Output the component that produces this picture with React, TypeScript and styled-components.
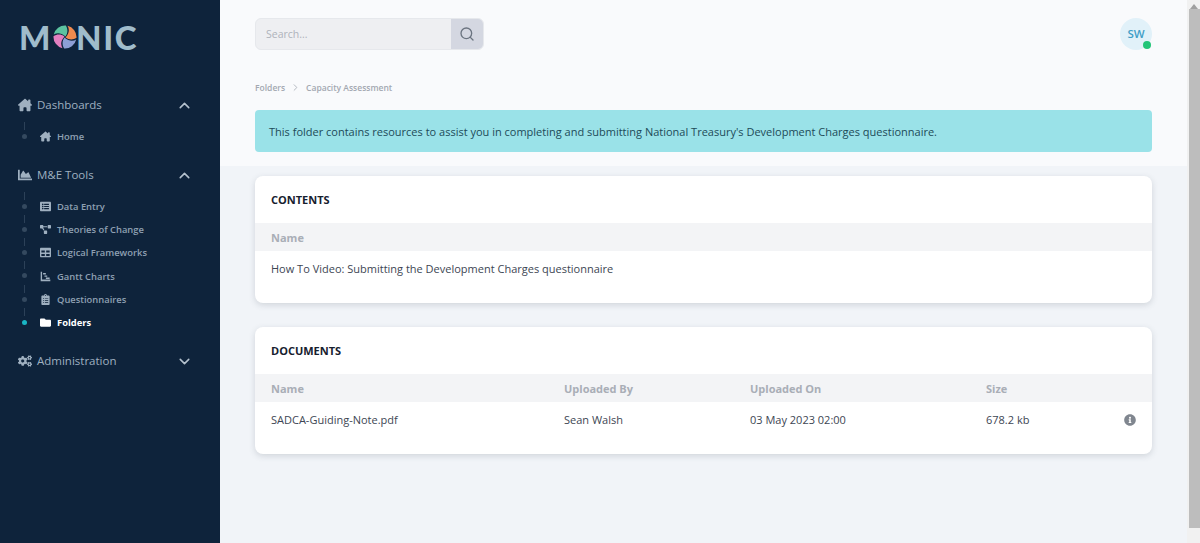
import React from "react";
import styled, { createGlobalStyle } from "styled-components";
import {
  FaChartArea, FaListAlt, FaProjectDiagram, FaTable,
  FaClipboardList, FaFolder, FaCogs, FaInfoCircle,
} from "react-icons/fa";
import { FaHouseChimney } from "react-icons/fa6";
import { FiChevronUp, FiChevronDown, FiChevronRight, FiSearch } from "react-icons/fi";

const Global = createGlobalStyle`
  html, body { margin: 0; padding: 0; height: 100%; overflow: hidden; }
  body { font-family: "Open Sans", "Liberation Sans", sans-serif; background: #f1f4f8; }
  * { box-sizing: border-box; }
`;

const Page = styled.div`
  display: flex;
  width: 1200px;
  height: 543px;
  overflow: hidden;
`;

const Sidebar = styled.aside`
  width: 220px;
  flex: none;
  background: #0e233b;
  color: #9fb0c0;
  padding: 18px 0 0 0;
  display: flex;
  flex-direction: column;
`;

const LogoRow = styled.div`
  display: flex;
  align-items: center;
  height: 38px;
  margin-left: 19px;
  margin-bottom: 39px;
  color: #a0bccb;
  font-size: 33px;
  line-height: 38px;
  font-weight: 900;
  letter-spacing: 1.6px;
  font-family: "Lato", "Open Sans", sans-serif;
`;

const LogoMark = styled.svg`
  width: 24px;
  height: 24px;
  margin: 0 -1px 0 1px;
`;

const GroupHead = styled.div`
  display: flex;
  align-items: center;
  height: 20px;
  padding-left: 18px;
  font-size: 11.5px;
  font-weight: 400;
  color: #9fb0c0;
  svg.lead { width: 14px; height: 14px; margin-right: 5px; }
  span { flex: 1; margin-top: -1px; }
  svg.chev { width: 17px; height: 17px; margin-right: 27px; color: #b4c1cd; stroke-width: 2.2; }
`;

const SubList = styled.ul<{ $h: number }>`
  list-style: none;
  margin: 0;
  padding: 9.5px 0 0 0;
  height: ${(p) => p.$h}px;
`;

const SubItem = styled.li<{ $active?: boolean }>`
  position: relative;
  display: flex;
  align-items: center;
  height: 23.3px;
  padding-left: 40px;
  font-size: 9.4px;
  font-weight: ${(p) => (p.$active ? 700 : 600)};
  color: ${(p) => (p.$active ? "#ffffff" : "#8fa0b2")};
  svg { width: 11px; height: 11px; margin-right: 6px; color: ${(p) => (p.$active ? "#ffffff" : "#9fb0c0")}; }
  &::before {
    content: "";
    position: absolute;
    left: 22px;
    top: 9px;
    width: 5px;
    height: 5px;
    border-radius: 50%;
    background: ${(p) => (p.$active ? "#19b5c4" : "#34495f")};
  }
  &::after {
    content: "";
    position: absolute;
    left: 24px;
    top: -3px;
    width: 1px;
    height: 8px;
    background: #2c4158;
  }
`;

const Main = styled.main`
  flex: 1;
  display: flex;
  flex-direction: column;
  min-width: 0;
`;

const Top = styled.div`
  background: #f9fafc;
  height: 166px;
  padding: 18px 35px 0 35px;
  flex: none;
`;

const TopBar = styled.div`
  display: flex;
  justify-content: space-between;
  align-items: flex-start;
`;

const Search = styled.div`
  display: flex;
  width: 229px;
  height: 32px;
  border-radius: 6px;
  overflow: hidden;
  border: 1px solid #e6e8ec;
  background: #eeeff2;
`;

const SearchInput = styled.div`
  flex: 1;
  padding-left: 10px;
  line-height: 30px;
  font-size: 10.5px;
  color: #aeb3bb;
`;

const SearchBtn = styled.div`
  width: 32px;
  display: flex;
  align-items: center;
  justify-content: center;
  background: #d4d7e1;
  color: #6b7480;
  svg { width: 16px; height: 16px; }
`;

const Avatar = styled.div`
  position: relative;
  width: 32px;
  height: 32px;
  border-radius: 50%;
  background: #e1f1f9;
  color: #3f9ec7;
  font-size: 11.5px;
  font-weight: 600;
  line-height: 32px;
  text-align: center;
  &::after {
    content: "";
    position: absolute;
    right: 1px;
    bottom: 1px;
    width: 8px;
    height: 8px;
    border-radius: 50%;
    background: #22c578;
  }
`;

const Crumbs = styled.nav`
  display: flex;
  align-items: center;
  margin-top: 30px;
  height: 14px;
  font-size: 8.5px;
  font-weight: 600;
  color: #a3a8b1;
  svg { width: 11px; height: 11px; margin: 0 5px; color: #aeb3bb; }
`;

const Alert = styled.div`
  margin-top: 16px;
  height: 42px;
  padding-left: 14px;
  display: flex;
  align-items: center;
  background: #9ae2e8;
  border-radius: 4px;
  font-size: 11px;
  color: #1d4b58;
`;

const Body = styled.div`
  flex: 1;
  padding: 10px 35px 0 35px;
`;

const Card = styled.section`
  background: #fff;
  border-radius: 8px;
  height: 127px;
  margin-bottom: 24px;
  box-shadow: 0 2px 6px rgba(60, 70, 90, 0.18);
`;

const CardTitle = styled.h2`
  margin: 0;
  height: 47px;
  padding: 0 0 1px 16px;
  display: flex;
  align-items: center;
  font-size: 11px;
  font-weight: 700;
  color: #16202e;
`;

const Row = styled.div`
  display: grid;
  grid-template-columns: 293px 186px 236px 1fr 30px;
  padding-left: 16px;
  align-items: center;
`;

const HeadRow = styled(Row)`
  height: 28px;
  background: #f3f4f6;
  font-size: 11px;
  font-weight: 700;
  color: #a9aeb6;
`;

const BodyRow = styled(Row)`
  height: 35px;
  font-size: 11px;
  color: #3d4653;
  svg { width: 12px; height: 12px; color: #80868f; display: block; margin-left: 2px; }
`;

const WideRow = styled.div`
  height: 36px;
  padding-left: 16px;
  line-height: 36px;
  font-size: 11px;
  color: #3d4653;
  white-space: nowrap;
`;

const Track = styled.div`
  width: 13px;
  flex: none;
  background: #f1f1f1;
  display: flex;
  flex-direction: column;
  align-items: center;
  padding: 0 0 0 1px;
`;

const TrackArrow = styled.div`
  height: 8px;
  flex: none;
  margin-top: 1px;
  width: 0;
  border-left: 4px solid transparent;
  border-right: 4px solid transparent;
  border-bottom: 5px solid #a0a0a0;
`;

const Thumb = styled.div`
  width: 11px;
  flex: 1;
  margin-bottom: 15px;
  background: #bdbdbd;
`;

const petal = "M0.8 9.5 A11.5 11.5 0 0 1 12.8 0.5 C15 4 15 8 12.5 11.5 C8 7.5 4 7.5 0.8 9.5Z";

const Logo = () => (
  <LogoMark viewBox="0 0 24 24" aria-hidden>
    <path d={petal} fill="#5cc3a0" />
    <path d={petal} fill="#f08a4e" transform="rotate(90 12 12)" />
    <path d={petal} fill="#8d9fd6" transform="rotate(180 12 12)" />
    <path d={petal} fill="#e27fc0" transform="rotate(270 12 12)" />
  </LogoMark>
);

const GanttIcon = () => (
  <svg viewBox="0 0 16 16" aria-hidden>
    <path d="M1 1h2v11.5h12V15H1z" fill="currentColor" />
    <path d="M4.5 3h4v2h-4zM6.5 6.5h4v2h-4zM8.5 9.5h5.5v2H8.5z" fill="currentColor" />
  </svg>
);

const tools: { icon: React.ReactNode; label: string; active?: boolean }[] = [
  { icon: <FaListAlt />, label: "Data Entry" },
  { icon: <FaProjectDiagram />, label: "Theories of Change" },
  { icon: <FaTable />, label: "Logical Frameworks" },
  { icon: <GanttIcon />, label: "Gantt Charts" },
  { icon: <FaClipboardList />, label: "Questionnaires" },
  { icon: <FaFolder />, label: "Folders", active: true },
];

export default function App() {
  return (
    <Page>
      <Global />
      <Sidebar>
        <LogoRow>M<Logo />NIC</LogoRow>
        <GroupHead>
          <FaHouseChimney className="lead" /><span>Dashboards</span><FiChevronUp className="chev" />
        </GroupHead>
        <SubList $h={50}>
          <SubItem><FaHouseChimney />Home</SubItem>
        </SubList>
        <GroupHead>
          <FaChartArea className="lead" /><span>M&amp;E Tools</span><FiChevronUp className="chev" />
        </GroupHead>
        <SubList $h={166}>
          {tools.map((t) => (
            <SubItem key={t.label} $active={t.active}>{t.icon}{t.label}</SubItem>
          ))}
        </SubList>
        <GroupHead>
          <FaCogs className="lead" /><span>Administration</span><FiChevronDown className="chev" />
        </GroupHead>
      </Sidebar>
      <Main>
        <Top>
          <TopBar>
            <Search>
              <SearchInput>Search...</SearchInput>
              <SearchBtn><FiSearch /></SearchBtn>
            </Search>
            <Avatar>SW</Avatar>
          </TopBar>
          <Crumbs>Folders<FiChevronRight />Capacity Assessment</Crumbs>
          <Alert>This folder contains resources to assist you in completing and submitting National Treasury's Development Charges questionnaire.</Alert>
        </Top>
        <Body>
          <Card>
            <CardTitle>CONTENTS</CardTitle>
            <HeadRow><div>Name</div></HeadRow>
            <WideRow>How To Video: Submitting the Development Charges questionnaire</WideRow>
          </Card>
          <Card>
            <CardTitle>DOCUMENTS</CardTitle>
            <HeadRow>
              <div>Name</div><div>Uploaded By</div><div>Uploaded On</div><div>Size</div><div />
            </HeadRow>
            <BodyRow>
              <div>SADCA-Guiding-Note.pdf</div>
              <div>Sean Walsh</div>
              <div>03 May 2023 02:00</div>
              <div>678.2 kb</div>
              <div><FaInfoCircle /></div>
            </BodyRow>
          </Card>
        </Body>
      </Main>
      <Track>
        <TrackArrow />
        <Thumb />
      </Track>
    </Page>
  );
}
